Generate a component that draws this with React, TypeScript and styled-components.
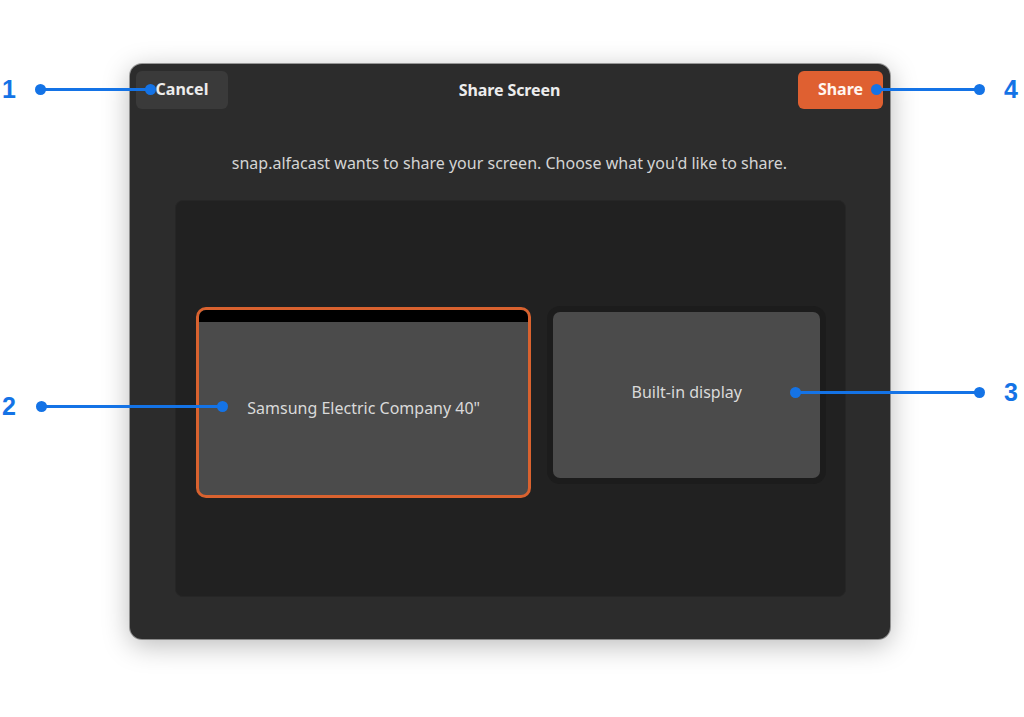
import styled, { createGlobalStyle } from "styled-components";

const GlobalStyle = createGlobalStyle`
  html, body {
    margin: 0;
    padding: 0;
    background: #ffffff;
  }
  * {
    box-sizing: border-box;
  }
`;

const Page = styled.div`
  position: relative;
  width: 1024px;
  height: 717px;
  padding: 64px 0 0 130px;
  font-family: "Noto Sans", "Open Sans", sans-serif;
  overflow: hidden;
`;

const Dialog = styled.div`
  width: 760px;
  height: 575px;
  background: #2c2c2c;
  border-radius: 12px;
  box-shadow: 0 6px 28px rgba(0, 0, 0, 0.28), 0 0 0 1px rgba(0, 0, 0, 0.35);
  display: flex;
  flex-direction: column;
  padding: 7px 7px 42px 6px;
`;

const Header = styled.div`
  display: grid;
  grid-template-columns: 1fr auto 1fr;
  align-items: center;
  height: 38px;
`;

const Title = styled.div`
  color: #ececec;
  font-size: 16px;
  font-weight: 700;
  letter-spacing: -0.1px;
`;

const HeaderButton = styled.button<{ $primary?: boolean }>`
  justify-self: ${(p) => (p.$primary ? "end" : "start")};
  width: ${(p) => (p.$primary ? "85px" : "92px")};
  height: 38px;
  border: none;
  border-radius: 6px;
  background: ${(p) => (p.$primary ? "#df6031" : "#3a3a3a")};
  color: ${(p) => (p.$primary ? "#fff6f0" : "#ececec")};
  font-family: inherit;
  font-size: 16px;
  font-weight: 700;
  cursor: pointer;
  padding: 0 0 2px;
`;

const Message = styled.p`
  margin: 44px 0 0;
  text-align: center;
  color: #d4d4d4;
  font-size: 16px;
  line-height: 20px;
`;

const MonitorPanel = styled.div`
  flex: 1;
  margin: 27px 37px 0 39px;
  background: #212121;
  border: 1px solid #262626;
  border-radius: 8px;
  display: flex;
  align-items: center;
  gap: 22px;
  padding: 0 25px 4px 20px;
`;

const Monitor = styled.div<{ $selected?: boolean; $w: number; $h: number }>`
  width: ${(p) => p.$w}px;
  height: ${(p) => p.$h}px;
  border-radius: ${(p) => (p.$selected ? "10px" : "7px")};
  border: ${(p) => (p.$selected ? "3px solid #d9622f" : "none")};
  background: #4b4b4b;
  box-shadow: ${(p) => (p.$selected ? "none" : "0 0 0 6px #1c1c1c")};
  margin: ${(p) => (p.$selected ? "12px 0 0" : "0 0 4px")};
  display: flex;
  flex-direction: column;
  overflow: hidden;
`;

const TopBar = styled.div`
  height: 12px;
  background: #000000;
`;

const MonitorLabel = styled.div<{ $lift?: number }>`
  flex: 1;
  display: flex;
  align-items: center;
  justify-content: center;
  color: #dadada;
  font-size: 16px;
  padding-bottom: ${(p) => p.$lift ?? 2}px;
`;

const Line = styled.div<{ $x1: number; $x2: number; $y: number }>`
  position: absolute;
  left: ${(p) => p.$x1}px;
  top: ${(p) => p.$y - 1.5}px;
  width: ${(p) => p.$x2 - p.$x1}px;
  height: 3px;
  background: #1473e6;
  &::before,
  &::after {
    content: "";
    position: absolute;
    top: -4px;
    width: 11px;
    height: 11px;
    border-radius: 50%;
    background: #1473e6;
  }
  &::before {
    left: -5.5px;
  }
  &::after {
    right: -5.5px;
  }
`;

const Num = styled.div<{ $x: number; $y: number }>`
  position: absolute;
  left: ${(p) => p.$x}px;
  top: ${(p) => p.$y - 14}px;
  width: 20px;
  text-align: center;
  font-family: "Liberation Sans", Arial, sans-serif;
  font-size: 25px;
  line-height: 28px;
  font-weight: 700;
  color: #1473e6;
`;

const callouts = [
  { n: "1", x1: 40, x2: 150, y: 89, nx: -1 },
  { n: "2", x1: 41, x2: 222, y: 406, nx: -1 },
  { n: "3", x1: 795, x2: 979, y: 392, nx: 1001 },
  { n: "4", x1: 876, x2: 979, y: 89, nx: 1001 },
];

export default function App() {
  return (
    <Page>
      <GlobalStyle />
      <Dialog>
        <Header>
          <HeaderButton>Cancel</HeaderButton>
          <Title>Share Screen</Title>
          <HeaderButton $primary>Share</HeaderButton>
        </Header>
        <Message>
          snap.alfacast wants to share your screen. Choose what you'd like to share.
        </Message>
        <MonitorPanel>
          <Monitor $selected $w={336} $h={191}>
            <TopBar />
            <MonitorLabel>Samsung Electric Company 40"</MonitorLabel>
          </Monitor>
          <Monitor $w={267} $h={166}>
            <MonitorLabel $lift={6}>Built-in display</MonitorLabel>
          </Monitor>
        </MonitorPanel>
      </Dialog>
      {callouts.map((c) => (
        <div key={c.n}>
          <Line $x1={c.x1} $x2={c.x2} $y={c.y} />
          <Num $x={c.nx} $y={c.y}>
            {c.n}
          </Num>
        </div>
      ))}
    </Page>
  );
}
